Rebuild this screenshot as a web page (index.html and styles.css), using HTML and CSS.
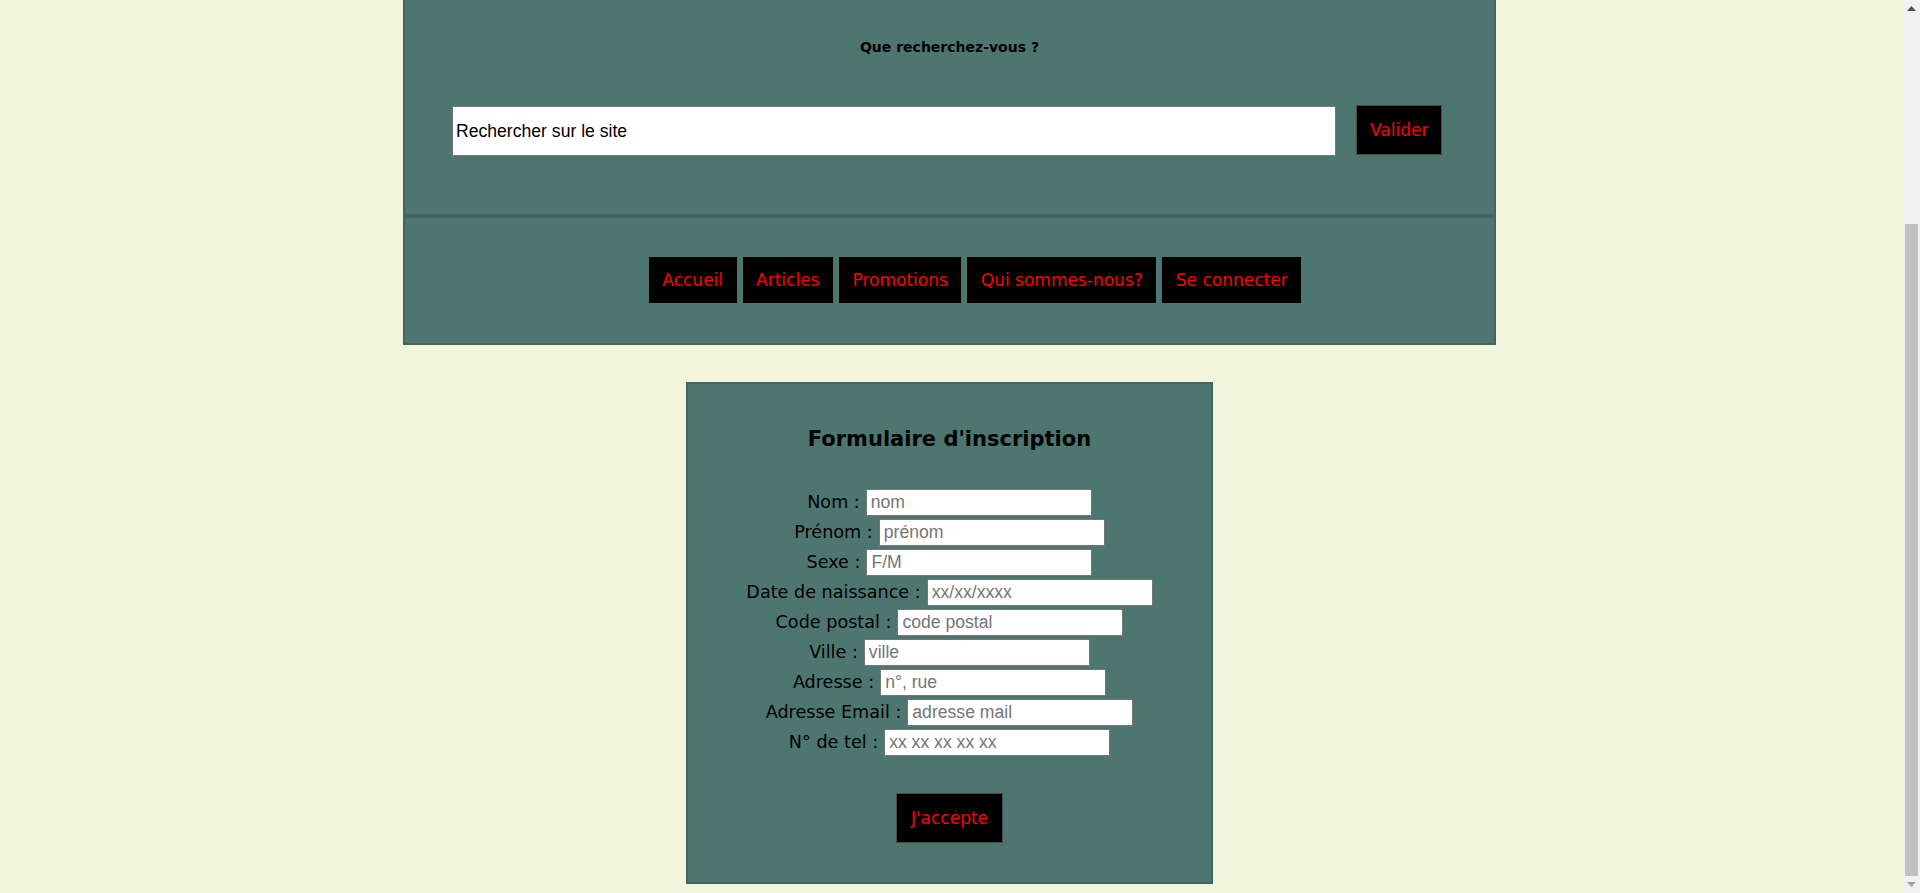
FILE: index.html
```html
<!DOCTYPE html>
<html lang="fr">
<head>
<meta charset="utf-8">
<title>Formulaire d'inscription</title>
<link rel="stylesheet" href="styles.css">
</head>
<body>
<div class="page">
  <main class="main">
    <header class="site-header">
      <section class="search">
        <p class="search-title">Que recherchez-vous ?</p>
        <form class="search-form">
          <input class="search-input" type="text" value="Rechercher sur le site">
          <button class="btn btn-valider" type="button">Valider</button>
        </form>
      </section>
      <nav class="nav">
        <a class="nav-btn">Accueil</a>
        <a class="nav-btn">Articles</a>
        <a class="nav-btn">Promotions</a>
        <a class="nav-btn">Qui sommes-nous?</a>
        <a class="nav-btn">Se connecter</a>
      </nav>
    </header>

    <section class="signup">
      <h2 class="signup-title">Formulaire d'inscription</h2>
      <div class="rows">
        <div class="row"><label class="lbl">Nom :</label><input class="field" type="text" placeholder="nom"></div>
        <div class="row"><label class="lbl">Prénom :</label><input class="field" type="text" placeholder="prénom"></div>
        <div class="row"><label class="lbl">Sexe :</label><input class="field" type="text" placeholder="F/M"></div>
        <div class="row"><label class="lbl">Date de naissance :</label><input class="field" type="text" placeholder="xx/xx/xxxx"></div>
        <div class="row"><label class="lbl">Code postal :</label><input class="field" type="text" placeholder="code postal"></div>
        <div class="row"><label class="lbl">Ville :</label><input class="field" type="text" placeholder="ville"></div>
        <div class="row"><label class="lbl">Adresse :</label><input class="field" type="text" placeholder="n°, rue"></div>
        <div class="row"><label class="lbl">Adresse Email :</label><input class="field" type="text" placeholder="adresse mail"></div>
        <div class="row"><label class="lbl">N° de tel :</label><input class="field" type="text" placeholder="xx xx xx xx xx"></div>
      </div>
      <div class="submit">
        <button class="btn btn-accept" type="button">J'accepte</button>
      </div>
    </section>
  </main>

  <div class="scrollbar">
    <div class="sb-btn">
      <svg width="9" height="5" viewBox="0 0 9 5"><polygon points="0,5 9,5 4.5,0" fill="#505050"/></svg>
    </div>
    <div class="sb-space"></div>
    <div class="sb-thumb"></div>
    <div class="sb-btn">
      <svg width="9" height="5" viewBox="0 0 9 5"><polygon points="0,0 9,0 4.5,5" fill="#a3a3a3"/></svg>
    </div>
  </div>
</div>
</body>
</html>
```

FILE: styles.css
```css
html, body {
  margin: 0;
  padding: 0;
  height: 100%;
}

body {
  background: #f0f5dc;
  font-family: "DejaVu Sans", Verdana, sans-serif;
  color: #000;
  overflow: hidden;
}

.page {
  display: flex;
  height: 893px;
}

.main {
  flex: 1;
  display: flex;
  flex-direction: column;
  align-items: center;
  padding-right: 4px;
}

/* ---------- header ---------- */
.site-header {
  width: 1093px;
  box-sizing: border-box;
  background: #4d7671;
  border: 2px solid #436460;
  border-top: 0;
}

.search {
  padding: 39px 0 58px;
  border-bottom: 2px solid #436460;
}

.search-title {
  margin: 0;
  text-align: center;
  font-weight: bold;
  font-size: 14px;
  line-height: 16px;
}

.search-form {
  display: flex;
  align-items: flex-start;
  margin: 50px 0 0;
  padding-left: 47px;
}

.search-input {
  width: 884px;
  height: 50px;
  box-sizing: border-box;
  margin: 1px 0 0;
  padding: 0 3px;
  border: 1px solid #767676;
  background: #fff;
  color: #000;
  font-family: "Liberation Sans", Arial, sans-serif;
  font-size: 17.6px;
  outline: none;
}

.btn {
  background: #000;
  color: #f00;
  font-family: "DejaVu Sans", Verdana, sans-serif;
  font-size: 17px;
  line-height: 20px;
  border: 1px solid #4a4a4a;
  box-sizing: border-box;
  height: 50px;
  margin: 0;
  cursor: pointer;
}

.btn-valider {
  margin-left: 20px;
  padding: 0 13px;
}

.nav {
  display: flex;
  justify-content: center;
  gap: 6px;
  padding: 39px 0 40px 51px;
  border-top: 2px solid #436460;
}

.nav-btn {
  display: block;
  background: #000;
  color: #f00;
  font-size: 17px;
  line-height: 20px;
  padding: 13px 13.5px;
  text-decoration: none;
}

/* ---------- form ---------- */
.signup {
  width: 527px;
  box-sizing: border-box;
  margin-top: 37px;
  background: #4d7671;
  border: 2px solid #436460;
  padding: 43px 0 39px;
}

.signup-title {
  margin: 0;
  text-align: center;
  font-size: 21px;
  line-height: 24px;
  font-weight: bold;
}

.rows {
  display: flex;
  flex-direction: column;
  gap: 3px;
  margin-top: 38px;
}

.row {
  display: flex;
  justify-content: center;
  align-items: baseline;
  gap: 6px;
}

.lbl {
  font-size: 17.6px;
  line-height: 20px;
}

.field {
  width: 226px;
  height: 27px;
  box-sizing: border-box;
  margin: 0;
  padding: 0 4px;
  border: 1px solid #767676;
  background: #fff;
  font-family: "Liberation Sans", Arial, sans-serif;
  font-size: 17.6px;
  color: #000;
  outline: none;
}

.field::placeholder {
  color: #757575;
  opacity: 1;
}

.submit {
  display: flex;
  justify-content: center;
  margin-top: 37px;
}

.btn-accept {
  padding: 0 14px;
}

/* ---------- scrollbar ---------- */
.scrollbar {
  width: 17px;
  flex: none;
  background: #f1f1f1;
  display: flex;
  flex-direction: column;
}

.sb-btn {
  height: 17px;
  display: flex;
  align-items: center;
  justify-content: center;
}

.sb-space {
  height: 207px;
}

.sb-thumb {
  height: 652px;
  margin: 0 2px;
  background: #c1c1c1;
}
```
